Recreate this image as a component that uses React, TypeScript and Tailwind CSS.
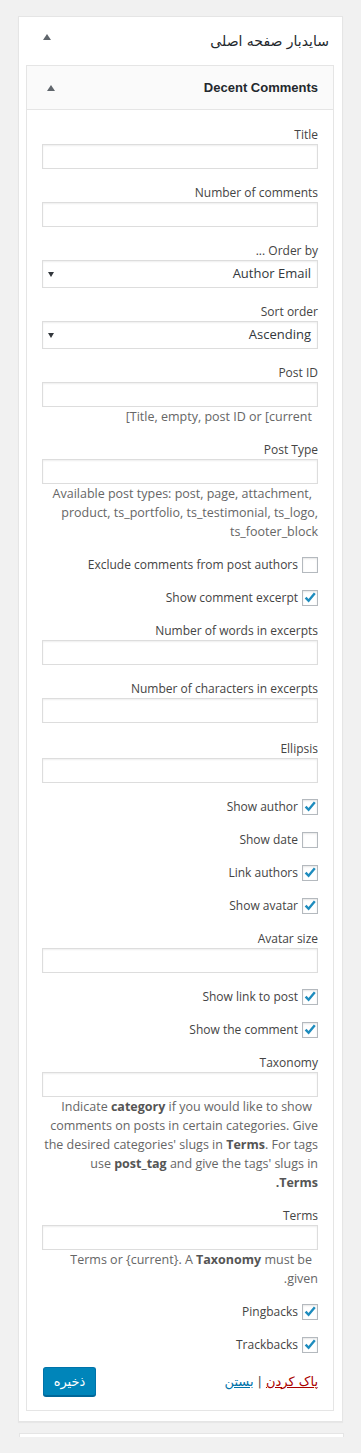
import React from "react"

const persian = "font-['DejaVu_Sans',sans-serif]"

function Label({ children }: { children: React.ReactNode }) {
  return <div className="text-[12px] leading-[19px] text-[#444]">{children}</div>
}

// help lines are written in the order they show on screen
function Help({ lines }: { lines: React.ReactNode[] }) {
  return (
    <div className="text-[12.5px] leading-[19px] text-[#666]">
      {lines.map((line, i) => (
        <div key={i} dir="ltr" className={`whitespace-nowrap text-right ${i === 0 ? "pr-[6px]" : ""}`}>
          {line}
        </div>
      ))}
    </div>
  )
}

function TextField({ label, help, extra = "" }: { label: string; help?: React.ReactNode[]; extra?: string }) {
  return (
    <div className={extra}>
      <Label>{label}</Label>
      <input
        type="text"
        className="block h-[25px] w-full border border-[#ddd] bg-white shadow-[inset_0_1px_2px_rgba(0,0,0,0.07)] outline-none"
      />
      {help && <Help lines={help} />}
    </div>
  )
}

function SelectField({ label, value }: { label: string; value: string }) {
  return (
    <div>
      <Label>{label}</Label>
      <div className="flex h-[28px] items-center justify-between border border-[#ddd] bg-white pl-[5px] pr-[6px] shadow-[inset_0_1px_2px_rgba(0,0,0,0.07)]">
        <span className="text-[13px] text-[#32373c]">{value}</span>
        <span className="h-0 w-0 border-x-[3px] border-t-[5px] border-x-transparent border-t-[#32373c]" />
      </div>
    </div>
  )
}

function Check({ label, checked }: { label: string; checked?: boolean }) {
  return (
    <div className="flex h-[19px] items-center gap-[4px]">
      <span className="relative h-[16px] w-[16px] shrink-0 border border-[#b4b9be] bg-white shadow-[inset_0_1px_2px_rgba(0,0,0,0.1)]">
        {checked && (
          <svg viewBox="0 0 16 16" className="absolute -left-px -top-px h-[16px] w-[16px] overflow-visible">
            <path d="M3.6 7.6 L6.6 10.8 L12.8 3.2" fill="none" stroke="#1e8cbe" strokeWidth="2.4" />
          </svg>
        )}
      </span>
      <span className="text-[12px] leading-[19px] text-[#444]">{label}</span>
    </div>
  )
}

const B = ({ children }: { children: React.ReactNode }) => <b className="text-[#555]">{children}</b>

export default function App() {
  return (
    <div className="min-h-[1453px] bg-[#f1f1f1] pt-[16px] font-['Open_Sans',sans-serif]">
      <div dir="rtl" className="ml-[18px] w-[325px] border border-[#e5e5e5] bg-white pb-[10px] shadow-[0_1px_1px_rgba(0,0,0,0.04)]">
        <div className="flex h-[48px] items-center justify-between pl-[24px] pr-[13px]">
          <span className={`${persian} text-[14px] text-[#23282d]`}>سایدبار صفحه اصلی</span>
          <span className="mb-[8px] h-0 w-0 border-x-[4px] border-b-[6px] border-x-transparent border-b-[#60666c]" />
        </div>

        <div className="mr-[8px] w-[308px] border border-[#e5e5e5] bg-white">
          <div className="flex h-[44px] items-center justify-between border-b border-[#e5e5e5] bg-[#fafafa] pl-[20px] pr-[15px]">
            <span className="font-['Liberation_Sans',sans-serif] text-[13px] font-bold text-[#23282d]">Decent Comments</span>
            <span className="h-0 w-0 border-x-[4px] border-b-[6px] border-x-transparent border-b-[#60666c]" />
          </div>

          <div className="flex flex-col gap-[14px] px-[15px] pb-[14px] pt-[15px]">
            <TextField label="Title" />
            <TextField label="Number of comments" />
            <SelectField label="Order by ..." value="Author Email" />
            <SelectField label="Sort order" value="Ascending" />
            <TextField label="Post ID" help={["[Title, empty, post ID or [current"]} />
            <TextField
              label="Post Type"
              help={[
                "Available post types: post, page, attachment,",
                "product, ts_portfolio, ts_testimonial, ts_logo,",
                "ts_footer_block",
              ]}
            />
            <Check label="Exclude comments from post authors" />
            <Check label="Show comment excerpt" checked />
            <TextField label="Number of words in excerpts" />
            <TextField label="Number of characters in excerpts" />
            <TextField label="Ellipsis" extra="mt-[2px]" />
            <Check label="Show author" checked />
            <Check label="Show date" />
            <Check label="Link authors" checked />
            <Check label="Show avatar" checked />
            <TextField label="Avatar size" />
            <Check label="Show link to post" checked />
            <Check label="Show the comment" checked />
            <TextField
              label="Taxonomy"
              help={[
                <>Indicate <B>category</B> if you would like to show</>,
                "comments on posts in certain categories. Give",
                <>the desired categories' slugs in <B>Terms</B>. For tags</>,
                <>use <B>post_tag</B> and give the tags' slugs in</>,
                <B>.Terms</B>,
              ]}
            />
            <TextField
              label="Terms"
              help={[<>Terms or {"{current}"}. A <B>Taxonomy</B> must be</>, ".given"]}
            />
            <Check label="Pingbacks" checked />
            <Check label="Trackbacks" checked />

            <div className="-mt-px flex items-center justify-between">
              <div className={`${persian} text-[13px] text-[#555]`}>
                <a href="#" className="text-[#a00] underline">پاک کردن</a>
                <span className="px-[4px]">|</span>
                <a href="#" className="text-[#0073aa] underline">بستن</a>
              </div>
              <button className={`${persian} ml-px h-[29px] w-[53px] rounded-[3px] border border-[#0073aa] border-b-[#006799] bg-[#0085ba] text-[13px] text-white shadow-[0_1px_0_#006799]`}>
                ذخیره
              </button>
            </div>
          </div>
        </div>
      </div>

      <div className="ml-[19px] mt-[11px] h-[4px] w-[325px] border-x border-t border-[#e5e5e5] bg-white" />
    </div>
  )
}
